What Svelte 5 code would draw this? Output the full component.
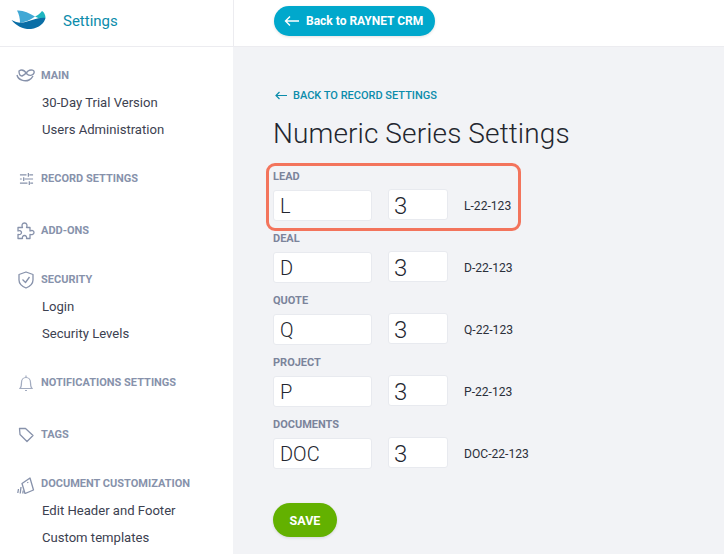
<script>
    const series = [
        { label: 'LEAD', prefix: 'L', marked: true },
        { label: 'DEAL', prefix: 'D' },
        { label: 'QUOTE', prefix: 'Q' },
        { label: 'PROJECT', prefix: 'P' },
        { label: 'DOCUMENTS', prefix: 'DOC' }
    ];

    // size: space under the group, it differs a little between the menu blocks
    const sections = [
        { id: 'main', title: 'MAIN', items: ['30-Day Trial Version', 'Users Administration'] },
        { id: 'record', title: 'RECORD SETTINGS', items: [], size: 'tall' },
        { id: 'addons', title: 'ADD-ONS', items: [], size: 'mid' },
        { id: 'security', title: 'SECURITY', items: ['Login', 'Security Levels'] },
        { id: 'bell', title: 'NOTIFICATIONS SETTINGS', items: [], size: 'tall' },
        { id: 'tags', title: 'TAGS', items: [], size: 'mid' },
        { id: 'doc', title: 'DOCUMENT CUSTOMIZATION', items: ['Edit Header and Footer', 'Custom templates'] }
    ];
</script>

<div class="page">
    <header class="topbar">
        <div class="brand">
            <svg class="logo" width="36" height="24" viewBox="0 0 36 24">
                <path d="M6 1.500 C12 1 18 4 24 7.500 C20 11 14 13 9 14 C9 9 8 5 6 1.500Z" fill="#41a8d5" />
                <path d="M24 7.500 C27 6.500 29 4.500 31 2 C33 3 34.500 6 34.500 9 C31 9.500 27 9.500 24 7.500Z" fill="#1eb5c0" />
                <path d="M.5 11 C4 13 8 14 12 13.500 C19 12.500 27 8 34.500 9 C33.500 14 28 19 20 20 C13 20.500 5 17 .5 11Z" fill="#0a6ea6" />
            </svg>
            <span>Settings</span>
        </div>
        <div class="topbar-main">
            <button class="crm-btn">
                <svg width="16" height="12" viewBox="0 0 16 12"><path d="M15 6H1.500M6 1.500 1.500 6 6 10.500" fill="none" stroke="#fff" stroke-width="1.400" /></svg>
                Back to RAYNET CRM
            </button>
        </div>
    </header>

    <div class="body">
        <nav class="sidebar">
            {#each sections as s}
                <section class="group {s.size ?? ''}">
                    <div class="heading">
                        <span class="icon">
                            {#if s.id === 'main'}
                                <svg width="20" height="16" viewBox="0 0 20 16" fill="none" stroke="#8792ab" stroke-width="1.400">
                                    <path d="M1 7 C2 12 9 14 13 12 C15 11 16 10 17 8" />
                                    <path d="M3 3 C6 1 9 3 11 6 C13 8 17 8 18 5 C19 2 15 1 12 3 C10 5 9 7 6 8 C4 8 3 6 3 3Z" />
                                </svg>
                            {:else if s.id === 'record'}
                                <svg width="15" height="14" viewBox="0 0 16 14" fill="none" stroke="#8792ab" stroke-width="1.300">
                                    <path d="M1 2.500H8M11 2.500H15M10 .500V4.500M1 7H3M6 7H15M5 5V9M1 11.500H9M12 11.500H15M11 9.500V13.500" />
                                </svg>
                            {:else if s.id === 'addons'}
                                <svg width="18" height="18" viewBox="0 0 18 18" fill="none" stroke="#8792ab" stroke-width="1.300" stroke-linejoin="round">
                                    <path d="M1 5.500H5.500C4.500 3.500 5 1 7.500 1C10 1 10.500 3.500 9.500 5.500H13V9C15 8 17 8.500 17 10.500C17 12.500 15 13 13 12.500V16.500H9.500C10 15 9 13.500 7.500 13.500C6 13.500 5 15 5.500 16.500H1V12.500C3 13 4.500 12 4.500 10.500C4.500 9 3 8 1 9Z" />
                                </svg>
                            {:else if s.id === 'security'}
                                <svg width="16" height="18" viewBox="0 0 16 18" fill="none" stroke="#8792ab" stroke-width="1.300" stroke-linejoin="round">
                                    <path d="M8 1 15 3.500V9C15 13 11.500 15.500 8 17C4.500 15.500 1 13 1 9V3.500Z" />
                                    <path d="M4.500 8.500 7.500 11.500 11.500 6" />
                                </svg>
                            {:else if s.id === 'bell'}
                                <svg width="14" height="17" viewBox="0 0 14 17" fill="none" stroke="#a3acc0" stroke-width="1.200">
                                    <path d="M1 13.500H13C11.500 12 11.500 10 11.500 7.500C11.500 4.500 9.500 2.500 7 2.500C4.500 2.500 2.500 4.500 2.500 7.500C2.500 10 2.500 12 1 13.500Z" />
                                    <path d="M7 .500V2.500M6 15.500H8" />
                                </svg>
                            {:else if s.id === 'tags'}
                                <svg width="16" height="16" viewBox="0 0 16 16" fill="none" stroke="#8792ab" stroke-width="1.300" stroke-linejoin="round">
                                    <path d="M1.500 1.500H7.500L15 8.500 9 14.500 2 7.500Z" />
                                </svg>
                            {:else}
                                <svg width="18" height="20" viewBox="0 0 18 20" fill="none" stroke="#8792ab" stroke-width="1.300" stroke-linejoin="round">
                                    <path d="M5 9.500 13 4 16.500 16 8 19.500Z" />
                                    <path d="M1.500 15 .8 19M4 13 3.200 19.500M6.200 16.500 5.800 19.500" />
                                    <path d="M10.500 8 11 9" />
                                </svg>
                            {/if}
                        </span>
                        {s.title}
                    </div>
                    {#each s.items as item}
                        <a class="item" href="#top">{item}</a>
                    {/each}
                </section>
            {/each}
        </nav>

        <main class="content">
            <a class="back" href="#top">
                <svg width="13" height="9" viewBox="0 0 13 9"><path d="M12 4.500H1M4.500 1 1 4.500 4.500 8" fill="none" stroke="#0b8cab" stroke-width="1.200" /></svg>
                BACK TO RECORD SETTINGS
            </a>
            <h1>Numeric Series Settings</h1>

            <form class="rows" onsubmit={(e) => e.preventDefault()}>
                {#each series as row}
                    <div class="row" class:marked={row.marked}>
                        <div class="label">{row.label}</div>
                        <div class="fields">
                            <input class="prefix" type="text" value={row.prefix} />
                            <input class="digits" type="text" value="3" />
                            <span class="preview">{row.prefix}-22-123</span>
                        </div>
                    </div>
                {/each}
                <button class="save" type="submit">SAVE</button>
            </form>
        </main>
    </div>
</div>

<style>
    :global(body) {
        font-family: Roboto, "Liberation Sans", sans-serif;
        margin: 0;
        padding: 0;
        overflow: hidden;
    }

    .page {
        width: 724px;
        height: 554px;
        overflow: hidden;
        background: #f2f3f6;
    }

    .topbar {
        display: flex;
        height: 46px;
        background: #ffffff;
        border-bottom: 1px solid #ececf0;
    }

    .brand {
        display: flex;
        align-items: center;
        width: 234px;
        padding: 0 0 4px 11px;
        box-sizing: border-box;
        border-right: 1px solid #ececf0;
        color: #0b8cab;
        font-size: 15px;
    }

    .logo {
        margin-right: 16px;
    }

    .topbar-main {
        padding: 6px 0 0 40px;
    }

    .crm-btn {
        display: flex;
        align-items: center;
        gap: 6px;
        height: 30px;
        padding: 0 12px 0 10px;
        border: 0;
        border-radius: 15px;
        background: #00a8cc;
        color: #ffffff;
        font-family: inherit;
        font-size: 12px;
        font-weight: 700;
        box-shadow: 0 1px 3px rgba(0, 0, 0, 0.12);
    }

    .body {
        display: flex;
    }

    .sidebar {
        width: 233px;
        height: 508px;
        box-sizing: border-box;
        flex: none;
        padding-top: 19px;
        background: #ffffff;
    }

    .group {
        margin-bottom: 26px;
    }

    .group.mid {
        margin-bottom: 29px;
    }

    .group.tall {
        margin-bottom: 32px;
    }

    .heading {
        position: relative;
        height: 20px;
        line-height: 20px;
        padding-left: 41px;
        color: #8792ab;
        font-size: 11px;
        font-weight: 700;
    }

    .icon {
        position: absolute;
        left: 16px;
        top: 0;
        width: 20px;
        height: 20px;
        display: flex;
        align-items: center;
        justify-content: center;
    }

    .item {
        display: block;
        height: 27px;
        line-height: 27px;
        padding-left: 42px;
        color: #3c4150;
        font-size: 13.100px;
        text-decoration: none;
    }

    .heading + .item {
        margin-top: 3px;
    }

    .content {
        flex: 1;
        padding: 40px 0 0 40px;
    }

    .back {
        display: flex;
        align-items: center;
        gap: 5px;
        height: 16px;
        margin-left: 2px;
        color: #0b8cab;
        font-size: 11px;
        font-weight: 500;
        text-decoration: none;
    }

    h1 {
        margin: 11px 0 0;
        color: #23262f;
        font-size: 28px;
        font-weight: 300;
        line-height: 40px;
        letter-spacing: 0.1px;
    }

    .rows {
        margin-top: 14px;
    }

    .row {
        position: relative;
        height: 62px;
    }

    .row.marked::before {
        content: "";
        position: absolute;
        left: -7px;
        top: -5px;
        width: 249px;
        height: 62px;
        border: 3px solid #f3745c;
        border-radius: 9px;
        pointer-events: none;
    }

    .label {
        height: 21px;
        line-height: 18px;
        color: #7b849b;
        font-size: 11px;
        font-weight: 700;
    }

    .fields {
        display: flex;
        align-items: flex-start;
    }

    input {
        height: 31px;
        box-sizing: border-box;
        border: 1px solid #e8eaef;
        border-radius: 3px;
        background: #ffffff;
        color: #23262f;
        font-family: inherit;
        font-weight: 300;
        padding: 0 6px;
        outline: none;
    }

    .prefix {
        width: 99px;
        margin-top: 1px;
        font-size: 20px;
    }

    .digits {
        width: 60px;
        margin-left: 16px;
        padding: 2px 5px 0;
        font-size: 24px;
    }

    .preview {
        margin-left: 16px;
        line-height: 34px;
        color: #2b2f3a;
        font-size: 12.100px;
    }

    .save {
        display: block;
        width: 64px;
        height: 34px;
        margin-top: 25px;
        border: 0;
        border-radius: 17px;
        background: #63b100;
        color: #ffffff;
        font-family: inherit;
        font-size: 12.500px;
        font-weight: 700;
        box-shadow: 0 1px 3px rgba(0, 0, 0, 0.12);
    }
</style>
